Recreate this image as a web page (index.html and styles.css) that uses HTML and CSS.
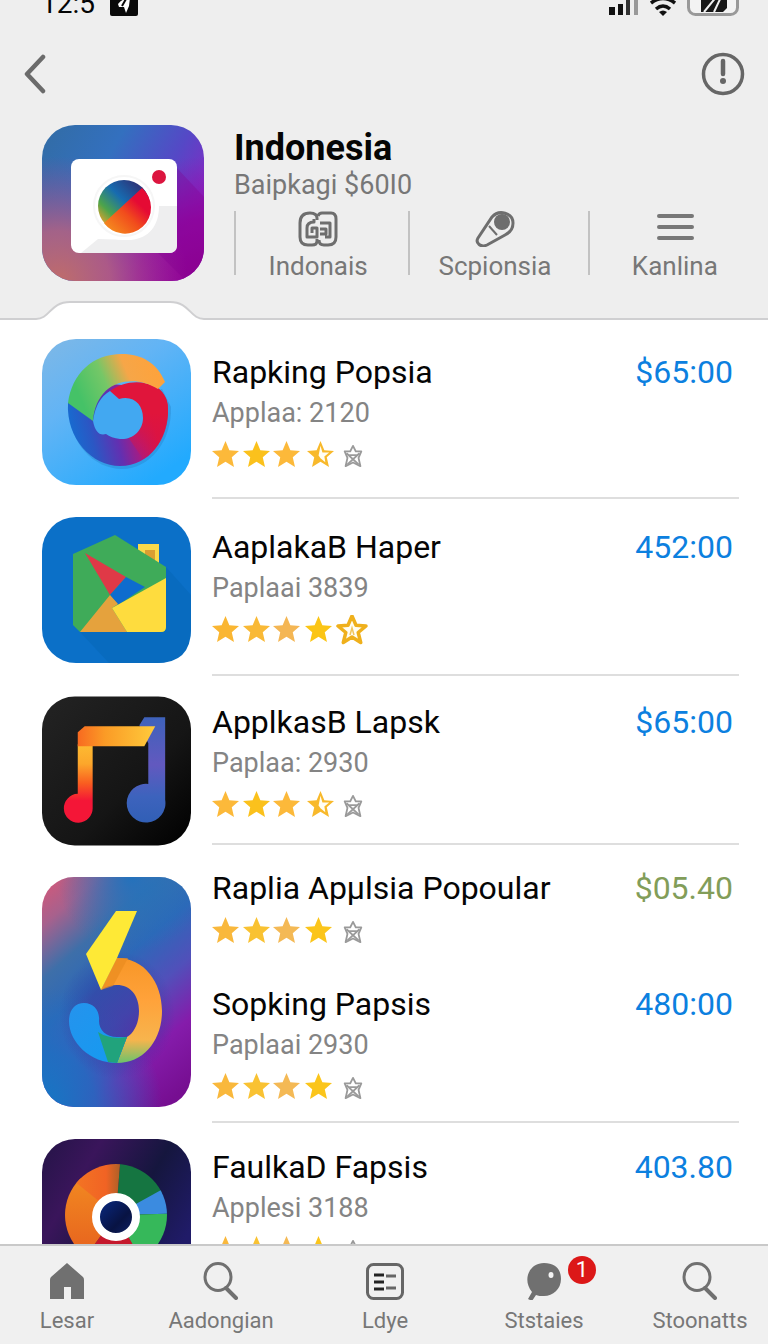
FILE: index.html
```html
<!DOCTYPE html>
<html lang="id">
<head>
<meta charset="utf-8">
<meta name="viewport" content="width=device-width, initial-scale=1">
<title>Indonesia</title>
<link rel="stylesheet" href="styles.css">
</head>
<body>
<svg class="defs" width="0" height="0" aria-hidden="true">
  <defs>
    <symbol id="star" viewBox="0 0 28 28"><path fill="currentColor" d="M14 0l4 9.500 10 .8-7.500 6.500 2.300 10.200-8.800-5.500L5.200 27l2.300-10.200L0 10.300l10-.8z"/></symbol>
    <symbol id="star-half" viewBox="0 0 28 28"><path fill="#f8b92b" d="M14 0l4 9.500 10 .8-7.500 6.500 2.300 10.200-8.800-5.500L5.200 27l2.300-10.200L0 10.300l10-.8z"/><path fill="#fffdf4" d="M14 5l2 7 7 0-5 4 1 6-5-4-2-3z"/></symbol>
    <symbol id="star-line" viewBox="0 0 34 34"><path fill="#fffdf2" stroke="#efb01c" stroke-width="3.500" stroke-linejoin="round" d="M17 3l4 9.300 10 .7-7.800 6.500 2.500 10-8.700-5.500L8.300 29.500l2.500-10L3 13l10-.7z"/><path d="M15 22l2-7 2 7" fill="none" stroke="#f1c55b" stroke-width="1.500"/></symbol>
    <symbol id="star-off" viewBox="0 0 22 26"><g fill="none" stroke="#9a9a9a" stroke-width="2" stroke-linejoin="round"><path d="M11 2l3 6h6l-3 7 2 9-8-4-8 4 2-9-3-7h6z"/><path d="M4 10l13 12M18 10L5 22M7 12h8"/></g></symbol>
    <symbol id="rating-half" viewBox="0 0 160 30">
      <use href="#star" x="0" y="1" width="27" height="27" color="#fcb93a"/><use href="#star" x="31" y="1" width="27" height="27" color="#fbc11c"/><use href="#star" x="61" y="1" width="27" height="27" color="#fcb93a"/><use href="#star-half" x="95" y="1" width="27" height="27"/><use href="#star-off" x="130" y="4" width="22" height="24"/>
    </symbol>
    <symbol id="rating-four" viewBox="0 0 160 30">
      <use href="#star" x="0" y="1" width="27" height="27" color="#f9b83c"/><use href="#star" x="31" y="1" width="27" height="27" color="#f9c232"/><use href="#star" x="61" y="1" width="27" height="27" color="#f4b955"/><use href="#star" x="93" y="1" width="27" height="27" color="#fbc51b"/><use href="#star-off" x="130" y="4" width="22" height="24"/>
    </symbol>
    <symbol id="rating-line" viewBox="0 0 160 30">
      <use href="#star" x="0" y="1" width="27" height="27" color="#fab632"/><use href="#star" x="31" y="1" width="27" height="27" color="#f9b936"/><use href="#star" x="61" y="1" width="27" height="27" color="#f4b654"/><use href="#star" x="93" y="1" width="27" height="27" color="#fbc515"/><use href="#star-line" x="123" y="-2" width="34" height="34"/>
    </symbol>
    <symbol id="search" viewBox="0 0 36 38"><g fill="none" stroke="#707070" stroke-linecap="round"><ellipse cx="15" cy="15" rx="13" ry="13.500" stroke-width="3"/><path d="M23 26l10 10" stroke-width="4"/></g></symbol>
  </defs>
</svg>

<header class="header">
  <div class="status">
    <span class="status-time">12:5</span>
    <svg class="status-app" viewBox="0 0 28 28" aria-hidden="true"><rect width="28" height="28" rx="2" fill="#0a0a0a"/><path d="M8 16c4-5 7-5 12-6l-1 8-3 7-2-6h-5z" fill="#fff"/><path d="M16 11l-4 7" stroke="#0a0a0a" stroke-width="2"/></svg>
    <span class="status-right">
      <svg width="30" height="24" viewBox="0 0 30 24" aria-hidden="true"><path d="M0 15h6v8H0z" fill="#111"/><path d="M9 12h5v11H9z" fill="#111"/><path d="M17 8h4v15h-4z" fill="#333"/><path d="M25 4h4v19h-4z" fill="#999"/></svg>
      <svg width="26" height="24" viewBox="0 0 26 24" aria-hidden="true"><g fill="none" stroke="#111" stroke-width="3.500"><path d="M1 11q12-9 24 0M6 17q7-6 14 0"/></g><path d="M9 20q4-3 8 0l-4 4z" fill="#111"/></svg>
      <svg width="52" height="28" viewBox="0 0 52 28" aria-hidden="true"><rect x="1.500" y="1.500" width="49" height="25" rx="7" fill="#f3f3f3" stroke="#999" stroke-width="3"/><path d="M14 4h26v16l-4 4H14z" fill="#161616"/><path d="M17 24L30 8M27 24l8-17" stroke="#eee" stroke-width="2"/></svg>
    </span>
  </div>
  <nav class="topnav">
    <button class="icon-button" type="button" aria-label="Back"><svg width="22" height="40" viewBox="0 0 22 40"><path d="M19 3L3 20l16 17" fill="none" stroke="#6b6b6b" stroke-width="4.500" stroke-linecap="round" stroke-linejoin="round"/></svg></button>
    <button class="icon-button" type="button" aria-label="Information"><svg width="44" height="44" viewBox="0 0 44 44"><circle cx="22" cy="22" r="19.500" fill="none" stroke="#666" stroke-width="3.500"/><path d="M22 9v13" stroke="#666" stroke-width="4.500" stroke-linecap="round"/><circle cx="22" cy="29" r="3" fill="#666"/></svg></button>
  </nav>
  <section class="hero">
    <svg class="hero-icon" viewBox="0 0 162 156" aria-hidden="true">
      <defs>
        <linearGradient id="h1" x1="0" y1="0" x2="1" y2=".55"><stop offset="0" stop-color="#326ca4"/><stop offset=".4" stop-color="#3370bf"/><stop offset=".72" stop-color="#5548c6"/><stop offset="1" stop-color="#8a25c4"/></linearGradient>
        <radialGradient id="h2" cx="0.100" cy="1" r=".8"><stop offset="0" stop-color="#c06c6a"/><stop offset=".4" stop-color="#b7607f" stop-opacity=".85"/><stop offset="1" stop-color="#a04090" stop-opacity="0"/></radialGradient>
        <radialGradient id="h3" cx="1" cy="1" r=".8"><stop offset="0" stop-color="#8f008e"/><stop offset=".5" stop-color="#9405a0" stop-opacity=".85"/><stop offset="1" stop-color="#9010b0" stop-opacity="0"/></radialGradient>
        <linearGradient id="lensA" x1="0" y1="1" x2="1" y2="0"><stop offset=".1" stop-color="#f4a029"/><stop offset=".3" stop-color="#4da44a"/><stop offset=".55" stop-color="#176bb0"/><stop offset=".9" stop-color="#302b70"/></linearGradient>
        <linearGradient id="lensB" x1="0" y1="1" x2="1" y2="0"><stop offset="0" stop-color="#f69b20"/><stop offset=".45" stop-color="#f14c1c"/><stop offset=".7" stop-color="#e50a34"/></linearGradient>
        <clipPath id="hc"><rect width="162" height="156" rx="33"/></clipPath>
      </defs>
      <g clip-path="url(#hc)">
        <path fill="url(#h1)" d="M0 0h162v156H0z"/><path fill="url(#h3)" d="M0 0h162v156H0z"/><path fill="url(#h2)" d="M0 0h162v156H0z"/>
        <path d="M134 42l28 30v84h-18l-28-28h18z" fill="#800090" opacity=".3"/>
      </g>
      <rect x="29" y="34" width="106" height="94" rx="8" fill="#fff"/>
      <path d="M39 128l17-14 33 1c18-2 28-14 28-34h18v39q0 8-8 8z" fill="#eeeeef"/>
      <circle cx="82" cy="81" r="34" fill="#fff"/><circle cx="82" cy="81" r="30" fill="none" stroke="#f6f6f6" stroke-width="2"/>
      <circle cx="82" cy="81" r="26" fill="url(#lensA)"/><path d="M62 98l38-35a26 26 0 1 1-38 35z" fill="url(#lensB)"/>
      <circle cx="117" cy="52" r="7" fill="#dc153f"/>
    </svg>
    <div class="hero-body">
      <h1 class="hero-title">Indonesia</h1>
      <p class="hero-sub">Baipkagi $60I0</p>
      <div class="stats">
        <a class="stat" href="#indonais"><svg width="40" height="36" viewBox="0 0 40 36" aria-hidden="true"><g fill="none" stroke="#6e6e6e" stroke-width="3" stroke-linejoin="round"><path d="M19 28v2q0 4-5 4h-4q-8 0-8-8V12Q2 2 12 2q7 0 7 5v2M20 5q1-3 4-3h9q5 0 5 6v18q0 8-8 8h-4q-5 0-5-5"/><path d="M16 8v3q-7 0-7 6v9h10V17h-5v5M22 12h10v14h-5M22 18h6v5h-6"/></g></svg><span>Indonais</span></a>
        <a class="stat" href="#scpionsia"><svg width="40" height="36" viewBox="0 0 40 36" aria-hidden="true"><path d="M3 27L17 6C24-2 38 2 38 12c0 7-4 10-8 12L12 34c-6 3-12-2-9-7z" fill="none" stroke="#6e6e6e" stroke-width="3"/><circle cx="27" cy="11" r="8" fill="#6e6e6e"/><path d="M14 15l8 9" stroke="#6e6e6e" stroke-width="2"/></svg><span>Scpionsia</span></a>
        <a class="stat" href="#kanlina"><svg class="menu-icon" width="40" height="36" viewBox="0 0 40 36" aria-hidden="true"><path d="M4 5h33M4 16h33M4 27h33" stroke="#777" stroke-width="4" stroke-linecap="round"/></svg><span>Kanlina</span></a>
      </div>
    </div>
  </section>
  <svg class="notch" width="168" height="22" viewBox="0 0 168 22" aria-hidden="true"><path d="M0 19C14 19 14 2 34 2H134C154 2 154 19 168 19V22H0Z" fill="#fff"/><path d="M0 19C14 19 14 2 34 2H134C154 2 154 19 168 19" fill="none" stroke="#cfcfd1" stroke-width="2"/></svg>
</header>

<main class="list">
  <article class="row row-first">
    <svg class="app-icon" viewBox="0 0 149 146" aria-hidden="true">
      <defs>
        <linearGradient id="a1" x1="0" y1="0" x2=".7" y2="1"><stop offset="0" stop-color="#7fb8e6"/><stop offset=".4" stop-color="#62b4f5"/><stop offset="1" stop-color="#22aafe"/></linearGradient>
        <linearGradient id="a2" x1="0" y1=".6" x2="1" y2=".3"><stop offset=".1" stop-color="#45c267"/><stop offset=".4" stop-color="#75c767"/><stop offset=".65" stop-color="#f6a648"/><stop offset="1" stop-color="#ffa23a"/></linearGradient>
        <linearGradient id="a3" x1="0" y1=".6" x2="1" y2=".4"><stop offset="0" stop-color="#136fd2"/><stop offset=".22" stop-color="#2b57c4"/><stop offset=".46" stop-color="#6230b1"/><stop offset=".66" stop-color="#ab1a80"/><stop offset=".85" stop-color="#de113f"/></linearGradient>
        <linearGradient id="a4" x1="0" y1="1" x2="0" y2="0"><stop offset="0" stop-color="#d4144d" stop-opacity=".2"/><stop offset=".6" stop-color="#e0153b"/></linearGradient>
      </defs>
      <rect width="149" height="146" rx="34" fill="url(#a1)"/>
      <path d="M28 68C26 104 52 130 80 130S130 102 129 68L120 50" fill="#247ac0" opacity=".35"/>
      <path d="M26 64C24 100 50 127 78 127C108 127 126 100 126 70C126 60 122 54 116 49L68 45L26 64Z" fill="url(#a3)"/>
      <path d="M68 52C82 42 100 40 116 49Q126 57 126 72C126 91 118 110 101 120L86 98z" fill="url(#a4)"/>
      <path d="M51 82Q54 60 68 52L77 60C92 56 101 66 101 79C101 92 90 101 78 100Q69 99 64 95Q54 98 51 82z" fill="#42a8f1"/>
      <path d="M26 64C30 35 50 15 80 15C100 15 115 24 123 43L116 50C90 34 54 42 51 82Z" fill="url(#a2)"/>
    </svg>
    <div class="row-body">
      <div class="entry"><div class="line"><h2 class="title">Rapking Popsia</h2><span class="price">$65:00</span></div>
      <p class="sub">Applaa: 2120</p>
      <svg class="stars" role="img" aria-label="3.5 of 5"><use href="#rating-half" width="160" height="30"/></svg></div>
    </div>
  </article>

  <article class="row row-second">
    <svg class="app-icon" viewBox="0 0 149 146" aria-hidden="true">
      <rect width="149" height="146" rx="34" fill="#0b70c8"/>
      <path d="M124 50l25 28v34q0 34-34 34H67L38 115z" fill="#086bbf"/>
      <path d="M96 27h21v36H96z" fill="#f9d94b"/><path d="M103 33h10v20h-10z" fill="#d99e32"/>
      <path d="M31 37L73 18l51 32v60q0 5-5 5H38l-7-7z" fill="#3fab59"/>
      <path d="M43 36l41 24-16 18z" fill="#df3947"/><path d="M84 60l19 10-27 18-8-10z" fill="#0e6cce"/>
      <path d="M68 78l8 9-6 4 15 24H38z" fill="#e5a23d"/><path d="M124 61v49q0 5-5 5H85L70 91z" fill="#fedc3e"/>
    </svg>
    <div class="row-body">
      <div class="entry"><div class="line"><h2 class="title">AaplakaB Haper</h2><span class="price">452:00</span></div>
      <p class="sub">Paplaai 3839</p>
      <svg class="stars" role="img" aria-label="4 of 5"><use href="#rating-line" width="160" height="30"/></svg></div>
    </div>
  </article>

  <article class="row row-third">
    <svg class="app-icon" viewBox="0 0 150 150" aria-hidden="true">
      <defs>
        <linearGradient id="c0" x1="0" y1="0" x2="1" y2="1"><stop offset="0" stop-color="#232323"/><stop offset=".6" stop-color="#151515"/><stop offset="1" stop-color="#000"/></linearGradient>
        <linearGradient id="c1" x1="0" y1="0" x2="1" y2="0"><stop offset="0" stop-color="#f86a20"/><stop offset=".35" stop-color="#fb9b26"/><stop offset="1" stop-color="#fecb3c"/></linearGradient>
        <linearGradient id="c2" x1="0" y1="0" x2="0" y2="1"><stop offset="0" stop-color="#fdbb32"/><stop offset=".25" stop-color="#fca72b"/><stop offset=".5" stop-color="#f95d20"/><stop offset=".72" stop-color="#f41637"/></linearGradient>
        <linearGradient id="c3" x1="0" y1="0" x2="0" y2="1"><stop offset="0" stop-color="#3e62bb"/><stop offset=".45" stop-color="#6259bf"/><stop offset=".75" stop-color="#3d63bd"/><stop offset="1" stop-color="#315fb6"/></linearGradient>
      </defs>
      <rect width="150" height="150" rx="33" fill="url(#c0)"/>
      <path d="M103 21h21v83a19.500 19.500 0 1 1-17-16V47L98 29z" fill="url(#c3)"/>
      <path d="M36 48h15v64a14.500 14.500 0 1 1-15-14z" fill="url(#c2)"/>
      <path d="M36 50V36l7-6h71l-11 20z" fill="url(#c1)"/>
    </svg>
    <div class="row-body">
      <div class="entry"><div class="line"><h2 class="title">ApplkasB Lapsk</h2><span class="price">$65:00</span></div>
      <p class="sub">Paplaa: 2930</p>
      <svg class="stars" role="img" aria-label="3.5 of 5"><use href="#rating-half" width="160" height="30"/></svg></div>
    </div>
  </article>

  <article class="row row-fourth">
    <svg class="app-icon" viewBox="0 0 149 230" aria-hidden="true">
      <defs>
        <linearGradient id="d1" gradientUnits="userSpaceOnUse" x1="-20" y1="20" x2="145" y2="210"><stop offset="0" stop-color="#d65878"/><stop offset=".14" stop-color="#a7618d"/><stop offset=".3" stop-color="#3e6fa9"/><stop offset=".45" stop-color="#2d68b8"/><stop offset=".62" stop-color="#5150ba"/><stop offset=".8" stop-color="#851cab"/><stop offset="1" stop-color="#760e91"/></linearGradient>
        <radialGradient id="d4" gradientUnits="userSpaceOnUse" cx="0" cy="230" r="120"><stop offset="0" stop-color="#1478c4"/><stop offset=".45" stop-color="#1a72c2" stop-opacity=".8"/><stop offset="1" stop-color="#2470c0" stop-opacity="0"/></radialGradient>
        <radialGradient id="d5" gradientUnits="userSpaceOnUse" cx="90" cy="0" r="75"><stop offset="0" stop-color="#2372bc"/><stop offset="1" stop-color="#2472bc" stop-opacity="0"/></radialGradient>
        <linearGradient id="d2" x1="0" y1="0" x2="0" y2="1"><stop offset="0" stop-color="#f79627"/><stop offset=".4" stop-color="#ffa23a"/><stop offset=".78" stop-color="#f7b44d"/><stop offset="1" stop-color="#6bc36b"/></linearGradient>
        <linearGradient id="d3" x1="0" y1="0" x2="1" y2="1"><stop offset="0" stop-color="#2593ed"/><stop offset="1" stop-color="#139bf1"/></linearGradient>
        <radialGradient id="d6"><stop offset=".5" stop-color="#33379c" stop-opacity=".5"/><stop offset="1" stop-color="#33379c" stop-opacity="0"/></radialGradient>
      </defs>
      <rect width="149" height="230" rx="32" fill="url(#d1)"/><rect width="149" height="230" rx="32" fill="url(#d4)"/><rect width="149" height="230" rx="32" fill="url(#d5)"/>
      <ellipse cx="75" cy="138" rx="58" ry="64" fill="url(#d6)"/>
      <path d="M75 81C102 81 120 105 120 134C120 163 102 186 75 186L85 160C92 156 97 146 97 134C97 118 88 108 75 108Q66 108 59 113z" fill="url(#d2)"/>
      <path d="M59 113l15-32h12l-15 28z" fill="#e98b20" opacity=".7"/>
      <path d="M75 186C48 186 27 165 27 144C27 133 33 126 42 126C52 126 58 134 57 144C57 153 64 160 75 160H85z" fill="url(#d3)"/>
      <path d="M56 155Q68 163 85 160L75 186l-9-1z" fill="#21a37c"/>
      <path d="M74 34h21L75 81 59 113 44 77z" fill="#fee936"/>
    </svg>
    <div class="row-body">
      <div class="entry"><div class="line"><h2 class="title">Raplia Apµlsia Popoular</h2><span class="price price-green">$05.40</span></div>
      <svg class="stars" role="img" aria-label="4 of 5"><use href="#rating-four" width="160" height="30"/></svg></div>
      <div class="entry"><div class="line"><h2 class="title">Sopking Papsis</h2><span class="price">480:00</span></div>
      <p class="sub">Paplaai 2930</p>
      <svg class="stars" role="img" aria-label="4 of 5"><use href="#rating-four" width="160" height="30"/></svg></div>
    </div>
  </article>

  <article class="row row-fifth">
    <svg class="app-icon" viewBox="0 0 149 150" aria-hidden="true">
      <defs>
        <linearGradient id="e1" x1="0" y1="0" x2="1" y2=".6"><stop offset="0" stop-color="#241447"/><stop offset=".3" stop-color="#3a155b"/><stop offset=".65" stop-color="#15163e"/><stop offset="1" stop-color="#201b68"/></linearGradient>
        <linearGradient id="e2" x1="0" y1="0" x2="1" y2="1"><stop offset="0" stop-color="#0a2d8b"/><stop offset=".6" stop-color="#081343"/><stop offset="1" stop-color="#10246d"/></linearGradient>
        <linearGradient id="e3" x1="0" y1="0" x2="1" y2="0"><stop offset="0" stop-color="#f58723"/><stop offset=".8" stop-color="#f16324"/><stop offset="1" stop-color="#a46028"/></linearGradient>
        <linearGradient id="e4" x1="0" y1="0" x2="0" y2="1"><stop offset="0" stop-color="#f79b22"/><stop offset="1" stop-color="#e2521d"/></linearGradient>
        <clipPath id="ec"><circle cx="74" cy="76" r="51"/></clipPath>
      </defs>
      <rect width="149" height="150" rx="33" fill="url(#e1)"/>
      <g clip-path="url(#ec)">
        <path d="M74 76L80 0h70v40z" fill="#157541"/><path d="M74 76l76-42v40z" fill="#3b8be0"/><path d="M74 76l76-2v76h-35z" fill="#36b85a"/>
        <path d="M74 76l42 74H20z" fill="#c5182c"/><path d="M74 76L20 150H0V0z" fill="url(#e4)"/><path d="M74 76L0 16V0h80z" fill="url(#e3)"/>
      </g>
      <circle cx="74" cy="78" r="20" fill="url(#e2)" stroke="#fff" stroke-width="8"/>
    </svg>
    <div class="row-body">
      <div class="entry"><div class="line"><h2 class="title">FaulkaD Fapsis</h2><span class="price">403.80</span></div>
      <p class="sub">Applesi 3188</p>
      <svg class="stars" role="img" aria-label="4 of 5"><use href="#rating-four" width="160" height="30"/></svg></div>
    </div>
  </article>
</main>

<nav class="tabs">
  <a class="tab" href="#lesar"><svg width="36" height="38" viewBox="0 0 36 38" aria-hidden="true"><path d="M18 1l16 14q1 1 1 3v19H22V25h-7v12H1V18q0-2 1-3z" fill="#707070"/></svg><span>Lesar</span></a>
  <a class="tab" href="#aadongian"><svg width="36" height="38"><use href="#search"/></svg><span>Aadongian</span></a>
  <a class="tab" href="#ldye"><svg width="38" height="38" viewBox="0 0 38 38" aria-hidden="true"><rect x="1.500" y="2.500" width="35" height="34" rx="6" fill="none" stroke="#666" stroke-width="3"/><path d="M8 13h10M8 20h10M8 27h10" stroke="#222" stroke-width="3"/><path d="M20 14h10M20 26h10" stroke="#666" stroke-width="3"/></svg><span>Ldye</span></a>
  <a class="tab" href="#ststaies"><span class="tab-icon"><svg width="36" height="38" viewBox="0 0 36 38" aria-hidden="true"><path d="M18 1C30 1 35 8 35 17c0 10-8 17-17 17-3 0-6 0-8-1l-4 6-4-2 4-7C-4 18 3 1 18 1z" fill="#707070"/><ellipse cx="25" cy="13" rx="2.500" ry="3" fill="#f4f4f4"/></svg><b class="badge">1</b></span><span>Ststaies</span></a>
  <a class="tab" href="#stoonatts"><svg width="36" height="38"><use href="#search"/></svg><span>Stoonatts</span></a>
</nav>
</body>
</html>
```
FILE: styles.css
```css
* { box-sizing: border-box; }

body {
  margin: 0;
  height: 100vh;
  display: flex;
  flex-direction: column;
  overflow: hidden;
  background: #fff;
  font-family: Roboto, "Liberation Sans", sans-serif;
  color: #050505;
}

h1, h2, p { margin: 0; font-weight: 400; }
a { color: inherit; text-decoration: none; }
svg { display: block; flex: none; }
.defs { position: absolute; }

.header {
  position: relative;
  flex: none;
  background: #eeeeee;
  border-bottom: 2px solid #cfcfd1;
  padding-bottom: 37px;
}

.status {
  height: 16px;
  display: flex;
  align-items: flex-end;
  padding: 0 29px 0 41px;
  overflow: hidden;
}
.status-time { font-size: 28px; line-height: 24px; margin-right: 15px; }
.status-app { width: 28px; height: 28px; }
.status-right { display: flex; align-items: flex-end; gap: 11px; margin-left: auto; }

.topnav {
  display: flex;
  align-items: center;
  justify-content: space-between;
  padding: 36px 23px 0 24px;
}
.icon-button { display: block; padding: 0; border: 0; background: none; }

.hero { display: flex; gap: 30px; padding: 29px 8px 0 42px; }
.hero-icon { width: 162px; height: 156px; }
.hero-body { flex: 1; padding-top: 3px; }
.hero-title { font-size: 36px; line-height: 40px; font-weight: 700; }
.hero-sub { font-size: 27px; line-height: 34px; color: #777; }

.stats { display: grid; grid-template-columns: 174fr 179fr 172fr; margin-top: 9px; }
.stat {
  display: flex;
  flex-direction: column;
  align-items: center;
  gap: 10px;
  height: 64px;
  padding-right: 8px;
  border-left: 2px solid #c2c2c2;
  color: #777;
  font-size: 26px;
  line-height: 18px;
}
.stat:last-child { padding-right: 0; }

.notch { position: absolute; left: 36px; bottom: -4px; }

.list { flex: 1; min-height: 0; overflow: hidden; }
.row { display: flex; gap: 21px; padding: 0 29px 0 42px; }
.app-icon { width: 149px; height: 146px; }
.row-body { flex: 1; border-bottom: 2px solid #dedede; }
.line { display: flex; justify-content: space-between; padding-right: 6px; line-height: 42px; }
.title { font-size: 32px; line-height: 42px; white-space: nowrap; }
.price { font-size: 32px; color: #0c80df; }
.price-green { color: #829d59; }
.sub { font-size: 27px; line-height: 40px; color: #848484; }
.stars { width: 160px; height: 44px; padding: 7px 0; }
.entry + .entry { margin-top: 30px; }

.row-first .app-icon { margin-top: 19px; }
.row-first .row-body { padding: 31px 0 20px; }
.row-second .app-icon { margin-top: 18px; }
.row-second .row-body { padding: 27px 0 22px; }
.row-third .app-icon { height: 150px; margin: 20px 0 -2px; }
.row-third .row-body { padding: 25px 0 16px; }
.row-fourth .app-icon { height: 230px; margin-top: 32px; }
.row-fourth .row-body { padding: 22px 0 12px; }
.row-fifth .app-icon { height: 150px; margin-top: 16px; }
.row-fifth .row-body { padding: 23px 0 16px; }

.tabs {
  flex: none;
  display: grid;
  grid-template-columns: 134fr 174fr 154fr 164fr 142fr;
  height: 100px;
  border-top: 2px solid #c9c9c9;
  background: #f0f0f0;
}
.tab {
  display: flex;
  flex-direction: column;
  align-items: center;
  gap: 6px;
  padding-top: 16px;
  color: #777;
  font-size: 22px;
  line-height: 30px;
}
.tab:last-child { padding-left: 6px; }
.tab-icon { position: relative; }
.badge {
  position: absolute;
  left: 42px;
  top: -6px;
  width: 28px;
  height: 28px;
  border-radius: 50%;
  background: #dc1818;
  color: #fff;
  font-size: 22px;
  font-weight: 400;
  line-height: 28px;
  text-align: center;
}
```
